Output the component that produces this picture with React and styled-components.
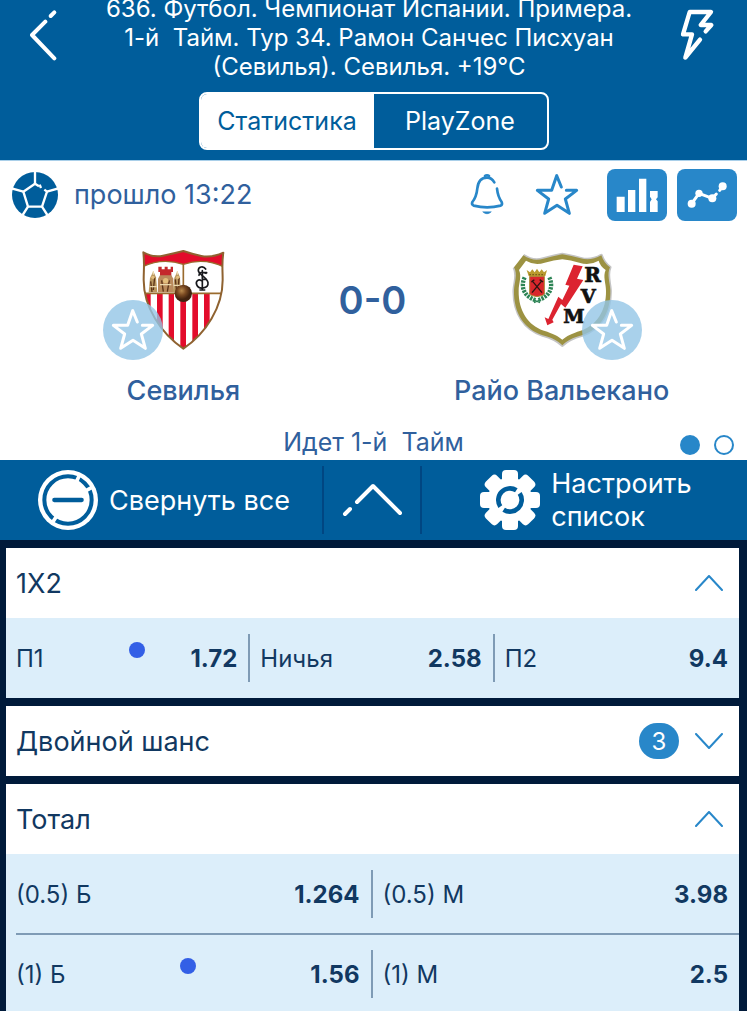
import React from "react";
import styled, { createGlobalStyle } from "styled-components";

const color = {
  brand: "#005d9b",
  accent: "#2887c9",
  text: "#113861",
  soft: "#30609d",
  night: "#001a3a",
  pale: "#dceefa",
  badge: "#a9cfe9",
  rule: "#7f9bb5",
};

const GlobalStyle = createGlobalStyle`
  *, *::before, *::after { box-sizing: border-box; }
  body {
    margin: 0;
    background: ${color.night};
    color: ${color.text};
    font-family: Inter, "Liberation Sans", sans-serif;
  }
  button { font: inherit; color: inherit; background: none; border: 0; padding: 0; margin: 0; cursor: pointer; }
  h1, h2, p { margin: 0; font-weight: 400; }
  svg { display: block; flex: none; }
`;

const Screen = styled.div`
  display: flex;
  flex-direction: column;
  height: 100vh;
  overflow: hidden;
`;

/* ---------- header ---------- */

const Header = styled.header`
  flex: none;
  display: flex;
  flex-direction: column;
  align-items: center;
  gap: 11px;
  padding-bottom: 10px;
  background: ${color.brand};
  color: #fff;
`;

const TopRow = styled.div`
  align-self: stretch;
  display: flex;
  justify-content: space-between;
  align-items: flex-start;
  padding: 0 32px 0 30px;
`;

const Title = styled.h1`
  flex: 1;
  margin-top: -6px;
  font-size: 24px;
  line-height: 29px;
  text-align: center;
  white-space: pre;
`;

const IconButton = styled.button`
  flex: none;
  padding-top: 9px;
`;

const Segments = styled.div`
  display: grid;
  grid-template-columns: 1fr 1fr;
  width: 350px;
  height: 58px;
  border: 2px solid #fff;
  border-radius: 8px;
  overflow: hidden;
`;

const Segment = styled.button`
  font-size: 25px;
  background: ${(p) => (p.$active ? "#fff" : "transparent")};
  color: ${(p) => (p.$active ? color.brand : "#fff")};
`;

/* ---------- match panel ---------- */

const Match = styled.section`
  flex: none;
  background: #fff;
  border-top: 1px solid ${color.badge};
  color: ${color.soft};
`;

const InfoRow = styled.div`
  display: flex;
  align-items: center;
  gap: 16px;
  padding: 8px 10px 0 12px;
`;

const Elapsed = styled.p`
  flex: 1;
  font-size: 27px;
  line-height: 32px;
`;

const ActionGroup = styled.div`
  display: flex;
  gap: 10px;
  margin-left: 4px;
`;

const Action = styled.button`
  display: grid;
  place-items: center;
  width: 60px;
  height: 52px;
  border-radius: 8px;
  background: ${(p) => (p.$filled ? color.accent : "transparent")};
`;

const Teams = styled.div`
  display: grid;
  grid-template-columns: 13fr 6fr 13fr;
  padding: 29px 56px 0 54px;
`;

const Team = styled.div`
  display: flex;
  flex-direction: column;
  align-items: center;
  gap: 25px;
`;

const CrestBox = styled.div`
  position: relative;
  width: 100px;
  height: 100px;
`;

const Favourite = styled.button`
  position: absolute;
  bottom: -10px;
  ${(p) => p.$side}: -30px;
  display: grid;
  place-items: center;
  width: 60px;
  height: 60px;
  border-radius: 50%;
  background: rgba(148, 197, 230, 0.8);
`;

const TeamName = styled.h2`
  font-size: 27px;
  line-height: 32px;
  font-weight: 500;
  white-space: nowrap;
`;

const Score = styled.p`
  height: 100px;
  font-size: 38px;
  line-height: 100px;
  font-weight: 600;
  text-align: center;
  white-space: nowrap;
`;

const MatchFooter = styled.div`
  display: grid;
  grid-template-columns: 1fr auto 1fr;
  align-items: center;
  margin-top: 17px;
  height: 36px;
  padding: 0 13px;
`;

const Status = styled.p`
  grid-column: 2;
  font-size: 25px;
  line-height: 32px;
`;

const Pager = styled.div`
  justify-self: end;
  align-self: end;
  display: flex;
  gap: 14px;
  padding-bottom: 5px;
`;

const PageDot = styled.button`
  width: 20px;
  height: 20px;
  border: 2px solid ${color.accent};
  border-radius: 50%;
  background: ${(p) => (p.$active ? color.accent : "#fff")};
`;

/* ---------- toolbar ---------- */

const Toolbar = styled.nav`
  flex: none;
  display: flex;
  align-items: center;
  height: 80px;
  padding-right: 3px;
  background: ${color.brand};
  color: #fff;
`;

const Tool = styled.button`
  flex: ${(p) => (p.$narrow ? "0 0 98px" : "1 1 0")};
  display: flex;
  align-items: center;
  justify-content: center;
  gap: 11px;
  height: 68px;
  padding-left: ${(p) => (p.$narrow ? "0" : "6px")};
  font-size: 27px;
  line-height: 33px;
  text-align: left;
  white-space: pre;

  & + & { border-left: 2px solid #004682; }
`;

/* ---------- markets ---------- */

const Markets = styled.main`
  flex: 1;
  min-height: 0;
  overflow-y: auto;
  scrollbar-width: none;
  display: flex;
  flex-direction: column;
  gap: 8px;
  padding: 8px 8px 8px 6px;
`;

const Market = styled.section`
  flex: none;
  background: #fff;
`;

const MarketHead = styled.button`
  display: flex;
  align-items: center;
  gap: 16px;
  width: 100%;
  height: 70px;
  padding: 0 16px 0 10px;
  text-align: left;
`;

const MarketName = styled.h2`
  flex: 1;
  font-size: 27px;
`;

const Count = styled.span`
  display: grid;
  place-items: center;
  width: 40px;
  height: 36px;
  border-radius: 18px;
  background: ${color.accent};
  color: #fff;
  font-size: 24px;
`;

const OddsRow = styled.div`
  position: relative;
  display: grid;
  grid-auto-flow: column;
  grid-auto-columns: 1fr;
  align-items: center;
  height: 80px;
  background: ${color.pale};

  & + &::before {
    content: "";
    position: absolute;
    top: -1px;
    left: 10px;
    right: 0;
    height: 2px;
    background: ${color.rule};
  }
`;

const Outcome = styled.button`
  position: relative;
  display: flex;
  align-items: center;
  justify-content: space-between;
  height: 48px;
  padding: 0 11px 0 10px;
  font-size: 24px;

  &:not(:last-child) { border-right: 2px solid ${color.rule}; }
`;

const Odds = styled.strong`
  font-weight: 700;
`;

const Marker = styled.span`
  position: absolute;
  top: 8px;
  left: ${(p) => p.$left};
  width: 16px;
  height: 16px;
  margin-left: -8px;
  border-radius: 50%;
  background: #335fe6;
`;

/* ---------- icons ---------- */

const line = { fill: "none", strokeLinecap: "round", strokeLinejoin: "round" };

const BackIcon = () => (
  <svg width="28" height="52" viewBox="90 28 84 156" {...line} stroke="#fff" strokeWidth="12">
    <path d="M136 66 96 106 163 176" />
    <path d="M152 49 163 38" />
  </svg>
);

const BoltIcon = () => (
  <svg width="35" height="52" viewBox="920 28 105 156" {...line} stroke="#fff" strokeWidth="13">
    <path d="M997 95 1014 76H982L1013 37H949L929 104H956L936 174 980 120" />
  </svg>
);

const BallIcon = () => (
  <svg width="46" height="46" viewBox="36 36 138 138">
    <circle cx="105" cy="105" r="69" fill={color.brand} />
    <g {...line} strokeLinecap="butt" stroke="#fff" strokeWidth="7">
      <path d="M105 34V71M141 95 176 85M70 95 34 85M126 140 144 168M84 140 66 168" />
      <path d="M117 79 105 71 70 95 84 140H126L141 95 133 89" />
      <path d="M119 74 123 84" />
    </g>
  </svg>
);

const BellIcon = () => (
  <svg width="36" height="44" viewBox="28 40 108 132" {...line} stroke={color.accent} strokeWidth="8">
    <path d="M104 68C98 58 91 54 82 54 63 54 55 68 53 86 51 106 47 116 38 127 36 132 38 136 42 138 66 144 99 144 123 138 127 136 128 132 126 127 118 116 114 106 112 87" />
    <path d="M76 49C79 46 85 46 88 49" />
    <path d="M70 157C77 164 87 164 94 157Z" fill={color.accent} strokeWidth="2" />
  </svg>
);

const StarIcon = ({ stroke = color.accent }) => (
  <svg width="44" height="44" viewBox="226 40 132 132" {...line} stroke={stroke} strokeWidth="9">
    <path d="M305 82 291 48 276 92H233L267 118 255 161 292 137 329 161 317 118 351 92H320" />
  </svg>
);

const BarsIcon = () => (
  <svg width="60" height="52" viewBox="441 27 180 156" fill="#fff">
    <path d="M470 110h24v46h-24zM504 90h22v66h-22zM537 56h22v100h-22zM570 93h23v19l-5 6 5 6v32h-23v-30l5-8-5-8z" />
  </svg>
);

const TrendIcon = () => (
  <svg width="60" height="52" viewBox="651 27 180 156" {...line} stroke="#fff" strokeWidth="9">
    <path d="M695 131 717 100 757 115 769 102M779 91 788 79" />
    <g fill="#fff" stroke="none">
      <circle cx="695" cy="131" r="12" />
      <circle cx="717" cy="100" r="11" />
      <circle cx="757" cy="115" r="12" />
      <circle cx="788" cy="79" r="12" />
    </g>
  </svg>
);

const CollapseIcon = () => (
  <svg width="60" height="60" viewBox="120 45 180 180">
    <circle cx="210" cy="135" r="90" fill="#fff" />
    <circle cx="210" cy="135" r="71" fill="none" stroke={color.brand} strokeWidth="12" />
    <path d="M236 79 246 57M264 107 286 95M178 180 163 203" stroke="#fff" strokeWidth="11" />
    <path d="M169 135H251" stroke={color.brand} strokeWidth="13" strokeLinecap="round" />
  </svg>
);

const UpIcon = () => (
  <svg width="62" height="36" viewBox="341 482 62 36" {...line} stroke="#fff" strokeWidth="4">
    <path d="M357 502 373 486 400 513M350 509 345 514" />
  </svg>
);

const GearIcon = () => (
  <svg width="60" height="60" viewBox="-90 -90 180 180">
    <g fill="#fff">
      <circle r="67" />
      {[0, 45, 90, 135].map((a) => (
        <rect key={a} x="-24" y="-90" width="48" height="180" rx="12" transform={`rotate(${a})`} />
      ))}
    </g>
    <g fill="none" stroke={color.brand} strokeWidth="14">
      <path d="M-29 20A35 35 0 0 1 19 -29M29 -20A35 35 0 0 1 -19 29" />
    </g>
  </svg>
);

const Chevron = ({ up }) => (
  <svg width="28" height="16" viewBox="0 0 28 16" {...line} stroke={color.accent} strokeWidth="2">
    <path d={up ? "M1 15 14 1 27 15" : "M1 1 14 15 27 1"} />
  </svg>
);

const sevillaShape =
  "M146 37Q178 54 205 47 240 40 266 33 292 42 320 48 350 54 386 38C381 70 384 90 384 120 384 200 335 280 266 326 198 280 147 200 147 120 147 90 150 70 146 37Z";

const SevillaCrest = () => (
  <svg width="100" height="100" viewBox="115 30 300 300">
    <defs>
      <clipPath id="sevilla">
        <path d={sevillaShape} />
      </clipPath>
      <radialGradient id="sevillaBall" cx="40%" cy="35%">
        <stop offset="0" stopColor="#b98a4e" />
        <stop offset="0.5" stopColor="#7b4a22" />
        <stop offset="1" stopColor="#40220f" />
      </radialGradient>
    </defs>
    <g clipPath="url(#sevilla)">
      <rect x="140" y="30" width="250" height="300" fill="#fff" />
      <path d="M140 30H390V82Q330 52 266 73 200 52 140 82Z" fill="#e30c2b" />
      <path d="M140 82Q200 52 266 73 330 52 390 82" fill="none" stroke="#9a6b2e" strokeWidth="4" />
      <path d="M187 160h17v170h-17zM222 160h16v170h-16zM257 160h17v170h-17zM293 160h17v170h-17zM328 160h17v170h-17zM150 160h18v170h-18z" fill="#e30c2b" />
      <path d="M146 160H386M266 73V160" stroke="#9a6b2e" strokeWidth="5" />
    </g>
    <g>
      <path d="M191 80h10v8h9v-8h9v8h9v-8h7v16h-44zM196 94h34v30h-34z" fill="#c4282c" />
      <path d="M190 116 196 106H230L236 116V157H190Z" fill="#b98a5c" />
      <path d="M176 94 184 112 188 157H162L166 114Z" fill="#b9975f" />
      <path d="M248 94 256 112 258 157H234L239 114Z" fill="#b9975f" />
      <path d="M168 124 172 156M180 112 176 150M201 121 206 155M224 121 218 155M242 118 246 156M253 114 250 154" stroke="#5c3418" strokeWidth="4" />
      <path d="M165 140H186M196 134H230M237 136H257M176 94V104M248 94V104" stroke="#ecd9ae" strokeWidth="4" />
      <circle cx="213" cy="122" r="8" fill="#e2bd7c" />
      <circle cx="175" cy="112" r="5" fill="#e2bd7c" />
      <circle cx="249" cy="112" r="5" fill="#e2bd7c" />
    </g>
    <g {...line} stroke="#17181c" strokeWidth="5">
      <path d="M333 87C326 76 310 80 311 92 312 104 338 112 340 128 342 146 312 150 306 134 302 124 312 116 320 122" />
      <path d="M334 100C322 94 313 98 313 106M323 92V146M316 150H330M323 98H336M323 118H334" />
    </g>
    <path d={sevillaShape} fill="none" stroke="#8f6230" strokeWidth="6" strokeLinejoin="round" />
    <circle cx="266" cy="160" r="26" fill="url(#sevillaBall)" />
  </svg>
);

const rayoShape =
  "M70 46Q100 66 130 56 160 48 187 43 214 48 242 55 272 64 304 46 312 70 330 82C320 104 330 128 331 150 333 220 300 268 246 286 216 294 202 302 187 316 172 302 158 294 128 286 74 268 40 220 42 150 43 128 54 104 42 82 60 70 70 46Z";

const RayoCrest = () => (
  <svg width="100" height="100" viewBox="36 30 300 300">
    <path d={rayoShape} fill="#fff" stroke="#c4c4c4" strokeWidth="9" strokeLinejoin="round" />
    <path d={rayoShape} fill="#9c9242" />
    <path d="M78 62Q104 78 134 68 162 61 187 58 212 61 238 68 268 78 296 62 300 78 317 90C308 110 318 130 318 152 319 212 290 256 242 272 214 281 200 288 187 299 174 288 160 281 132 272 84 256 55 212 56 152 56 130 66 110 57 90 72 78 78 62Z" fill="#fff" />
    <g fill="none" stroke="#2d8455" strokeWidth="13" strokeDasharray="7 3">
      <path d="M74 112C62 137 68 168 108 181" />
      <path d="M148 112C160 137 154 168 112 181" />
    </g>
    <path d="M102 180 120 188M120 180 102 188" stroke="#2d8455" strokeWidth="4" />
    <path d="M80 90 90 97 97 88 104 97 111 86 118 97 125 88 132 97 141 90 136 108H86Z" fill="#b99a2e" />
    <path d="M88 104H134" stroke="#7a5f18" strokeWidth="4" strokeDasharray="5 4" />
    <path d="M89 109H133V162Q131 167 111 170 91 167 89 162Z" fill="#d9262c" stroke="#a98a34" strokeWidth="3" />
    <path d="M96 122 126 158M126 122 96 158M94 126 103 119M119 119 129 126" stroke="#2b1512" strokeWidth="4" />
    <path d="M221 74 248 79 231 116 250 120 196 203 183 192 157 239 161 247 142 256 134 232 145 237 175 170 187 180 208 137 196 134Z" fill="#dc2330" />
    <g fill="#111" stroke="#111" strokeWidth="2" fontFamily="DejaVu Serif, serif" fontWeight="700" textAnchor="middle">
      <text x="278" y="126" fontSize="60">R</text>
      <text x="265" y="189" fontSize="58">V</text>
      <text x="222" y="250" fontSize="58">M</text>
    </g>
  </svg>
);

/* ---------- data ---------- */

const markets = [
  {
    name: "1Х2",
    open: true,
    rows: [
      [
        { label: "П1", odds: "1.72", marker: "54%" },
        { label: "Ничья", odds: "2.58" },
        { label: "П2", odds: "9.4" },
      ],
    ],
  },
  { name: "Двойной шанс", open: false, count: 3, rows: [] },
  {
    name: "Тотал",
    open: true,
    rows: [
      [
        { label: "(0.5) Б", odds: "1.264" },
        { label: "(0.5) М", odds: "3.98" },
      ],
      [
        { label: "(1) Б", odds: "1.56", marker: "50%" },
        { label: "(1) М", odds: "2.5" },
      ],
    ],
  },
];

const TeamBlock = ({ name, crest, side }) => (
  <Team>
    <CrestBox>
      {crest}
      <Favourite $side={side} aria-label={`В избранное: ${name}`}>
        <StarIcon stroke="#fff" />
      </Favourite>
    </CrestBox>
    <TeamName>{name}</TeamName>
  </Team>
);

export default function App() {
  return (
    <Screen>
      <GlobalStyle />
      <Header>
        <TopRow>
          <IconButton aria-label="Назад"><BackIcon /></IconButton>
          <Title>
            {"636. Футбол. Чемпионат Испании. Примера.\n1-й  Тайм. Тур 34. Рамон Санчес Писхуан\n(Севилья). Севилья. +19°С"}
          </Title>
          <IconButton aria-label="Быстрая ставка"><BoltIcon /></IconButton>
        </TopRow>
        <Segments>
          <Segment $active>Статистика</Segment>
          <Segment>PlayZone</Segment>
        </Segments>
      </Header>

      <Match>
        <InfoRow>
          <BallIcon />
          <Elapsed>прошло 13:22</Elapsed>
          <ActionGroup>
            <Action aria-label="Уведомления"><BellIcon /></Action>
            <Action aria-label="В избранное"><StarIcon /></Action>
          </ActionGroup>
          <ActionGroup>
            <Action $filled aria-label="Статистика матча"><BarsIcon /></Action>
            <Action $filled aria-label="График"><TrendIcon /></Action>
          </ActionGroup>
        </InfoRow>
        <Teams>
          <TeamBlock name="Севилья" side="left" crest={<SevillaCrest />} />
          <Score>0-0</Score>
          <TeamBlock name="Райо Вальекано" side="right" crest={<RayoCrest />} />
        </Teams>
        <MatchFooter>
          <Status>Идет 1-й&nbsp; Тайм</Status>
          <Pager>
            <PageDot $active aria-label="Страница 1" />
            <PageDot aria-label="Страница 2" />
          </Pager>
        </MatchFooter>
      </Match>

      <Toolbar>
        <Tool><CollapseIcon />Свернуть все</Tool>
        <Tool $narrow aria-label="Скрыть панель"><UpIcon /></Tool>
        <Tool><GearIcon />{"Настроить\nсписок"}</Tool>
      </Toolbar>

      <Markets>
        {markets.map((m) => (
          <Market key={m.name}>
            <MarketHead aria-expanded={m.open}>
              <MarketName>{m.name}</MarketName>
              {m.count && <Count>{m.count}</Count>}
              <Chevron up={m.open} />
            </MarketHead>
            {m.rows.map((row) => (
              <OddsRow key={row[0].label}>
                {row.map((o) => (
                  <Outcome key={o.label}>
                    <span>{o.label}</span>
                    {o.marker && <Marker $left={o.marker} />}
                    <Odds>{o.odds}</Odds>
                  </Outcome>
                ))}
              </OddsRow>
            ))}
          </Market>
        ))}
      </Markets>
    </Screen>
  );
}
